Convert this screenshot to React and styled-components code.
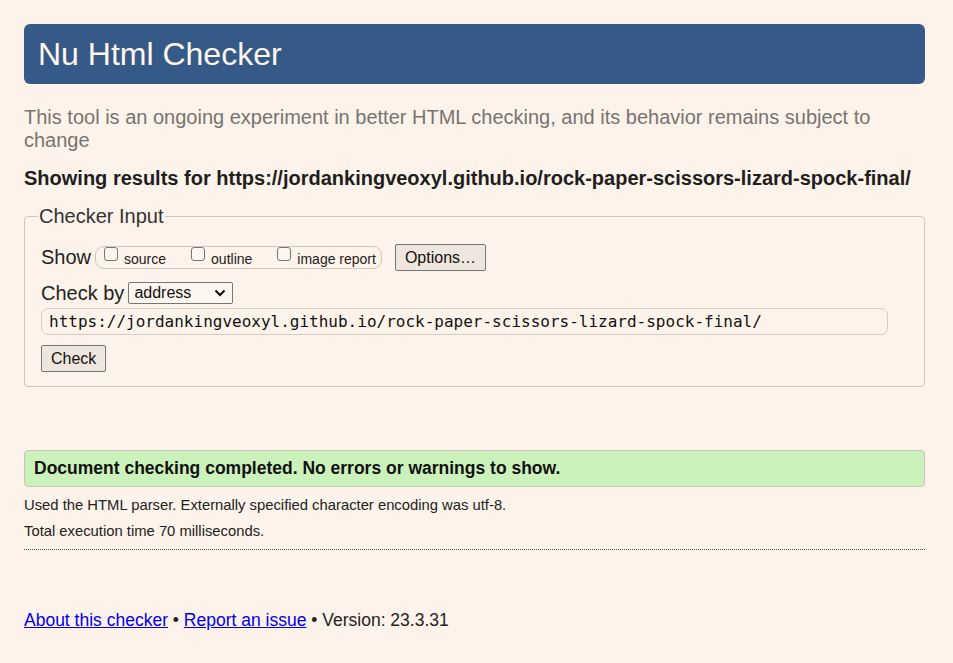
import React from "react";
import styled, { createGlobalStyle } from "styled-components";

const GlobalStyle = createGlobalStyle`
  body {
    margin: 0;
    background: #fdf3ea;
    font-family: "Liberation Sans", Arial, sans-serif;
    color: #222;
  }
`;

const Page = styled.div`
  width: 901px;
  padding: 24px 28px 24px 24px;
`;

const Title = styled.h1`
  margin: 0;
  height: 60px;
  padding-left: 14px;
  background: #365a87;
  border-radius: 6px;
  color: #fff6ee;
  font-size: 32px;
  font-weight: normal;
  line-height: 60px;
`;

const Intro = styled.p`
  margin: 22px 0 0;
  font-size: 20px;
  line-height: 23px;
  color: #787370;
`;

const Results = styled.h2`
  margin: 15px 0 0;
  font-size: 20px;
  line-height: 23px;
  font-weight: bold;
  color: #1e1e1e;
`;

const Fieldset = styled.fieldset`
  margin: 15px 0 0;
  padding: 4px 16px 14px;
  border: 1px solid #cfc6bc;
  border-radius: 4px;
  display: flex;
  flex-direction: column;
`;

const Legend = styled.legend`
  padding: 0 1px;
  margin-left: -3px;
  font-size: 20px;
  line-height: 23px;
  color: #333;
`;

const Row = styled.div`
  display: flex;
  align-items: center;
  height: ${(p) => p.$h}px;
  margin-top: ${(p) => p.$mt}px;
`;

const Label = styled.span`
  font-size: 20px;
  line-height: 23px;
  color: #222;
  margin-right: 4px;
`;

const Group = styled.span`
  display: flex;
  align-items: flex-start;
  height: 21px;
  padding-left: 8px;
  padding-right: 5px;
  border: 1px solid #cfc6bc;
  border-radius: 9px;
`;

const Item = styled.label`
  display: flex;
  align-items: flex-start;
  margin-right: ${(p) => (p.$last ? 0 : 25)}px;
  font-size: 14px;
  color: #222;
`;

const Box = styled.input.attrs({ type: "checkbox" })`
  appearance: none;
  width: 14px;
  height: 14px;
  margin: 0 6px 0 0;
  border: 1px solid #767676;
  border-radius: 3px;
  background: #fdf6ef;
`;

const ItemText = styled.span`
  padding-top: 4px;
  line-height: 16px;
`;

const Button = styled.button`
  height: 27px;
  margin-left: ${(p) => p.$ml || 0}px;
  padding: 0 ${(p) => p.$px}px;
  border: 1px solid #767676;
  border-radius: 2px;
  background: #efe6dd;
  font-family: "Liberation Sans", Arial, sans-serif;
  font-size: 16px;
  color: #111;
`;

const Select = styled.div`
  display: flex;
  align-items: center;
  justify-content: space-between;
  box-sizing: border-box;
  width: 105px;
  height: 22px;
  padding: 0 6px 0 5px;
  border: 1px solid #767676;
  border-radius: 2px;
  background: #fdf6ef;
  font-size: 16px;
  color: #111;
`;

const UrlInput = styled.div`
  box-sizing: border-box;
  width: 847px;
  height: 27px;
  margin-top: 3px;
  padding-left: 7px;
  border: 1px solid #d6cdc3;
  border-radius: 7px;
  font-family: "DejaVu Sans Mono", "Liberation Mono", monospace;
  font-size: 16px;
  line-height: 25px;
  color: #111;
`;

const Success = styled.div`
  margin-top: 63px;
  height: 35px;
  padding-left: 9px;
  border: 1px solid #cbc3b9;
  border-radius: 4px;
  background: #ccf2bb;
  font-size: 17.5px;
  font-weight: bold;
  line-height: 35px;
  color: #111;
`;

const Note = styled.p`
  margin: ${(p) => p.$mt}px 0 0;
  font-size: 14.8px;
  line-height: 17px;
  color: #222;
`;

const Rule = styled.hr`
  margin: 9px 0 0;
  height: 0;
  border: none;
  border-top: 1px dotted #555;
`;

const Footer = styled.p`
  margin: 60px 0 0;
  font-size: 17.5px;
  line-height: 21px;
  color: #222;
`;

const Link = styled.a`
  color: #0000ee;
`;

const Chevron = () => (
  <svg width="12" height="8" viewBox="0 0 12 8">
    <path d="M1.5 1.5 L6 6 L10.5 1.5" fill="none" stroke="#111" strokeWidth="2" />
  </svg>
);

export default function App() {
  const url = "https://jordankingveoxyl.github.io/rock-paper-scissors-lizard-spock-final/";
  return (
    <Page>
      <GlobalStyle />
      <Title>Nu Html Checker</Title>
      <Intro>
        This tool is an ongoing experiment in better HTML checking, and its behavior remains subject to change
      </Intro>
      <Results>Showing results for {url}</Results>
      <Fieldset>
        <Legend>Checker Input</Legend>
        <Row $h={27} $mt={12}>
          <Label>Show</Label>
          <Group>
            <Item>
              <Box />
              <ItemText>source</ItemText>
            </Item>
            <Item>
              <Box />
              <ItemText>outline</ItemText>
            </Item>
            <Item $last>
              <Box />
              <ItemText>image report</ItemText>
            </Item>
          </Group>
          <Button $ml={13} $px={9}>Options…</Button>
        </Row>
        <Row $h={24} $mt={10}>
          <Label>Check by</Label>
          <Select>
            <span>address</span>
            <Chevron />
          </Select>
        </Row>
        <UrlInput>{url}</UrlInput>
        <Row $h={27} $mt={10}>
          <Button $px={9}>Check</Button>
        </Row>
      </Fieldset>
      <Success>Document checking completed. No errors or warnings to show.</Success>
      <Note $mt={10}>Used the HTML parser. Externally specified character encoding was utf-8.</Note>
      <Note $mt={9}>Total execution time 70 milliseconds.</Note>
      <Rule />
      <Footer>
        <Link href="#">About this checker</Link> • <Link href="#">Report an issue</Link> • Version: 23.3.31
      </Footer>
    </Page>
  );
}
